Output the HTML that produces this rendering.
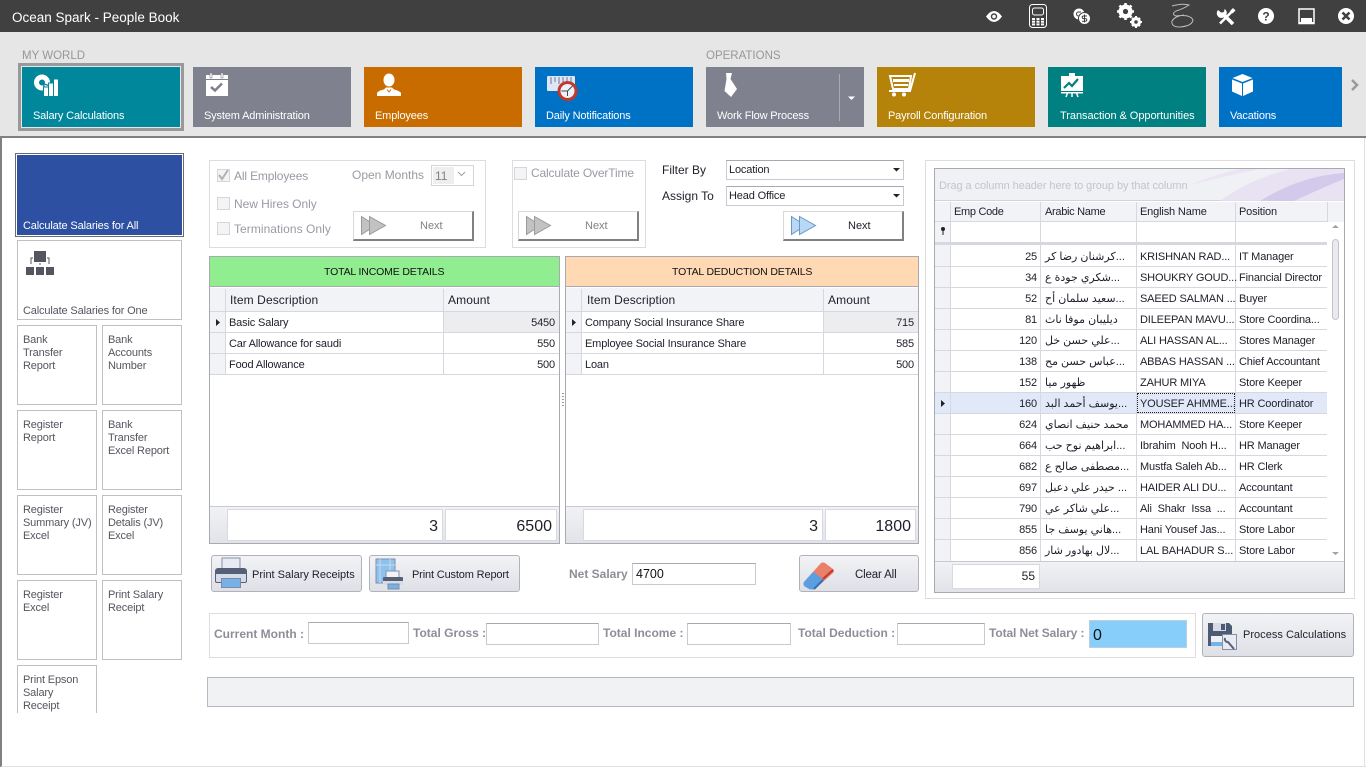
<!DOCTYPE html>
<html><head><meta charset="utf-8"><title>Ocean Spark - People Book</title>
<style>
html,body{margin:0;padding:0;width:1366px;height:768px;overflow:hidden;background:#fff}
body{position:relative;font-family:"Liberation Sans","DejaVu Sans",sans-serif;font-size:11px;letter-spacing:-.15px;color:#1e1e2a}
.b{position:absolute;box-sizing:border-box}
.t{position:absolute;white-space:pre;line-height:18px}
.w{color:#fff}
.g{color:#9a9aa4;font-size:12px;letter-spacing:0;line-height:14px}
.lb{color:#8e8e98;font-weight:bold;font-size:12px;letter-spacing:0;line-height:14px}
.n{color:#808088;font-size:11px;letter-spacing:0}
.p{letter-spacing:0}
.h{font-size:12px;letter-spacing:.1px;line-height:14px}
.th{color:#111;font-size:10.5px;letter-spacing:-.15px}
.ar{letter-spacing:0;direction:ltr}
.r{text-align:right}
.tile{position:absolute;top:67px;height:60px}
.side{position:absolute;box-sizing:border-box;border:1px solid #c0c0c0;width:80px;height:80px;padding:8px 0 0 5px;line-height:13px;color:#55555f}
.next{position:absolute;box-sizing:border-box;height:30px;width:121px;background:#fff;border:1px solid #d8d8d8;border-right:2px solid #808080;border-bottom:2px solid #808080}
.cb{position:absolute;box-sizing:border-box;width:13px;height:13px;border:1px solid #d5d5da;background:#f4f4f6}
.inp{position:absolute;box-sizing:border-box;background:#fff;border:1px solid #c9c9d2;border-top-color:#a8a8b4}
.btn{position:absolute;box-sizing:border-box;height:37px;border:1px solid #b2b2bc;border-radius:3px;background:linear-gradient(#f2f3f6,#dfe0e6)}
.hl{position:absolute;background:#d7d8df}
.ft{position:absolute;background:linear-gradient(#f1f2f5,#e2e3e8);box-sizing:border-box}
.fb{position:absolute;box-sizing:border-box;background:#fff;border:1px solid #d9dae0;font-size:16px;letter-spacing:0;text-align:right;padding-right:4px;line-height:33px;color:#1e1e2a}
.s{position:absolute;background:#f2f3f6}
</style></head><body>

<!-- title bar and ribbon -->
<div class="b" style="left:0;top:0;width:1366px;height:32px;background:#404040"></div>
<div class="t w" style="left:12px;top:9px;font-size:13.5px;letter-spacing:0;line-height:17px">Ocean Spark - People Book</div>
<div class="b" style="left:0;top:32px;width:1366px;height:104px;background:#e6e6e6"></div>
<div class="b" style="left:0;top:136px;width:1366px;height:2px;background:#808080"></div>
<div class="b" style="left:0;top:138px;width:2px;height:629px;background:#808080"></div>
<div class="b" style="left:1px;top:766px;width:1365px;height:1px;background:#e0e0e0"></div>
<div class="b" style="left:1364px;top:138px;width:1px;height:629px;background:#e0e0e0"></div>
<div class="t" style="left:22px;top:47px;color:#979797;font-size:11.5px;letter-spacing:0">MY WORLD</div>
<div class="t" style="left:706px;top:47px;color:#979797;font-size:11.5px;letter-spacing:0">OPERATIONS</div>

<div class="b" style="left:18px;top:63px;width:166px;height:68px;border:3px solid #999"></div>
<div class="tile" style="left:22px;width:158px;background:#00879c"></div>
<div class="tile" style="left:193px;width:158px;background:#80818f"></div>
<div class="tile" style="left:364px;width:158px;background:#c96c00"></div>
<div class="tile" style="left:535px;width:158px;background:#0072c6"></div>
<div class="tile" style="left:706px;width:158px;background:#80818f"></div>
<div class="tile" style="left:877px;width:158px;background:#b5830a"></div>
<div class="tile" style="left:1048px;width:158px;background:#008080"></div>
<div class="tile" style="left:1219px;width:123px;background:#0072c6"></div>
<div class="b" style="left:839px;top:74px;width:1px;height:47px;background:#a9aab4"></div>
<div class="t w" style="left:33px;top:107px">Salary Calculations</div>
<div class="t w" style="left:204px;top:107px">System Administration</div>
<div class="t w" style="left:375px;top:107px">Employees</div>
<div class="t w" style="left:546px;top:107px">Daily Notifications</div>
<div class="t w" style="left:717px;top:107px">Work Flow Process</div>
<div class="t w" style="left:888px;top:107px">Payroll Configuration</div>
<div class="t w" style="left:1060px;top:107px;letter-spacing:-.05px">Transaction &amp; Opportunities</div>
<div class="t w" style="left:1230px;top:107px">Vacations</div>

<!-- left tiles -->
<div class="b" style="left:15px;top:153px;width:169px;height:84px;border:1px solid #6a6a72"></div>
<div class="b" style="left:17px;top:155px;width:165px;height:80px;background:#2d50a3"></div>
<div class="t w" style="left:23px;top:217px">Calculate Salaries for All</div>
<div class="b" style="left:17px;top:240px;width:165px;height:80px;border:1px solid #c0c0c0"></div>
<div class="t" style="left:23px;top:302px;color:#55555f">Calculate Salaries for One</div>
<div class="side" style="left:17px;top:325px">Bank<br>Transfer<br>Report</div>
<div class="side" style="left:102px;top:325px">Bank<br>Accounts<br>Number</div>
<div class="side" style="left:17px;top:410px">Register<br>Report</div>
<div class="side" style="left:102px;top:410px">Bank<br>Transfer<br>Excel Report</div>
<div class="side" style="left:17px;top:495px">Register<br>Summary (JV)<br>Excel</div>
<div class="side" style="left:102px;top:495px">Register<br>Detalis (JV)<br>Excel</div>
<div class="side" style="left:17px;top:580px">Register<br>Excel</div>
<div class="side" style="left:102px;top:580px">Print Salary<br>Receipt</div>
<div class="side" style="left:17px;top:665px;height:48px;border-bottom:0;overflow:hidden">Print Epson<br>Salary<br>Receipt</div>

<!-- option groups -->
<div class="b" style="left:209px;top:160px;width:277px;height:88px;border:1px solid #dddddf"></div>
<div class="cb" style="left:217px;top:169px"></div>
<div class="t g" style="left:234px;top:169px;letter-spacing:-.15px">All Employees</div>
<div class="cb" style="left:217px;top:197px"></div>
<div class="t g" style="left:234px;top:197px;letter-spacing:-.05px">New Hires Only</div>
<div class="cb" style="left:217px;top:222px"></div>
<div class="t g" style="left:234px;top:222px;letter-spacing:.05px">Terminations Only</div>
<div class="t g" style="left:352px;top:168px">Open Months</div>
<div class="b" style="left:431px;top:165px;width:43px;height:21px;border:1px solid #d5d5da"></div>
<div class="b" style="left:433px;top:167px;width:21px;height:17px;background:#eeeeef"></div>
<div class="t n" style="left:435px;top:169px;font-size:12px;line-height:14px">11</div>
<div class="next" style="left:353px;top:211px"></div>
<div class="t n" style="left:420px;top:217px">Next</div>

<div class="b" style="left:512px;top:160px;width:134px;height:88px;border:1px solid #dddddf"></div>
<div class="cb" style="left:514px;top:167px"></div>
<div class="t g" style="left:531px;top:166px;letter-spacing:-.15px">Calculate OverTime</div>
<div class="next" style="left:518px;top:211px"></div>
<div class="t n" style="left:585px;top:217px">Next</div>

<div class="t" style="left:662px;top:163px;font-size:12px;letter-spacing:0;line-height:14px">Filter By</div>
<div class="t" style="left:662px;top:189px;font-size:12px;letter-spacing:0;line-height:14px">Assign To</div>
<div class="inp" style="left:726px;top:160px;width:178px;height:20px"></div>
<div class="inp" style="left:726px;top:186px;width:178px;height:20px"></div>
<div class="t" style="left:729px;top:161px">Location</div>
<div class="t" style="left:729px;top:187px">Head Office</div>
<div class="next" style="left:783px;top:211px"></div>
<div class="t p" style="left:848px;top:217px">Next</div>

<!-- income grid -->
<div class="b" style="left:209px;top:256px;width:351px;height:288px;border:1px solid #a9a9b2;background:#fff"></div>
<div class="b" style="left:210px;top:257px;width:349px;height:30px;background:#90ee90;border-bottom:1px solid #a9a9b2"></div>
<div class="t th" style="left:324px;top:263px">TOTAL INCOME DETAILS</div>
<div class="s" style="left:210px;top:288px;width:349px;height:24px"></div>
<div class="s" style="left:210px;top:312px;width:15px;height:63px"></div>
<div class="b" style="left:444px;top:312px;width:115px;height:20px;background:#ededef"></div>
<div class="hl" style="left:210px;top:311px;width:349px;height:1px"></div>
<div class="hl" style="left:210px;top:332px;width:349px;height:1px"></div>
<div class="hl" style="left:210px;top:353px;width:349px;height:1px"></div>
<div class="hl" style="left:210px;top:374px;width:349px;height:1px"></div>
<div class="hl" style="left:225px;top:289px;width:1px;height:86px"></div>
<div class="hl" style="left:443px;top:289px;width:1px;height:86px"></div>
<div class="t h" style="left:230px;top:293px">Item Description</div>
<div class="t h" style="left:448px;top:293px">Amount</div>
<div class="t" style="left:229px;top:314px">Basic Salary</div>
<div class="t" style="left:229px;top:335px">Car Allowance for saudi</div>
<div class="t" style="left:229px;top:356px">Food Allowance</div>
<div class="t r" style="left:456px;width:99px;top:314px">5450</div>
<div class="t r" style="left:456px;width:99px;top:335px">550</div>
<div class="t r" style="left:456px;width:99px;top:356px">500</div>
<div class="ft" style="left:210px;top:506px;width:349px;height:37px;border-top:1px solid #c9c9d2"></div>
<div class="fb" style="left:227px;top:509px;width:216px;height:32px">3</div>
<div class="fb" style="left:445px;top:509px;width:112px;height:32px">6500</div>

<!-- deduction grid -->
<div class="b" style="left:565px;top:256px;width:354px;height:288px;border:1px solid #a9a9b2;background:#fff"></div>
<div class="b" style="left:566px;top:257px;width:352px;height:30px;background:#ffd8b4;border-bottom:1px solid #a9a9b2"></div>
<div class="t th" style="left:672px;top:263px">TOTAL DEDUCTION DETAILS</div>
<div class="s" style="left:566px;top:288px;width:352px;height:24px"></div>
<div class="s" style="left:566px;top:312px;width:15px;height:63px"></div>
<div class="b" style="left:824px;top:312px;width:94px;height:20px;background:#ededef"></div>
<div class="hl" style="left:566px;top:311px;width:352px;height:1px"></div>
<div class="hl" style="left:566px;top:332px;width:352px;height:1px"></div>
<div class="hl" style="left:566px;top:353px;width:352px;height:1px"></div>
<div class="hl" style="left:566px;top:374px;width:352px;height:1px"></div>
<div class="hl" style="left:581px;top:289px;width:1px;height:86px"></div>
<div class="hl" style="left:823px;top:289px;width:1px;height:86px"></div>
<div class="t h" style="left:587px;top:293px">Item Description</div>
<div class="t h" style="left:828px;top:293px">Amount</div>
<div class="t" style="left:585px;top:314px">Company Social Insurance Share</div>
<div class="t" style="left:585px;top:335px">Employee Social Insurance Share</div>
<div class="t" style="left:585px;top:356px">Loan</div>
<div class="t r" style="left:815px;width:99px;top:314px">715</div>
<div class="t r" style="left:815px;width:99px;top:335px">585</div>
<div class="t r" style="left:815px;width:99px;top:356px">500</div>
<div class="ft" style="left:566px;top:506px;width:352px;height:37px;border-top:1px solid #c9c9d2"></div>
<div class="fb" style="left:583px;top:509px;width:240px;height:32px">3</div>
<div class="fb" style="left:825px;top:509px;width:91px;height:32px">1800</div>
<div class="b" style="left:562px;top:393px;width:2px;height:13px;background:repeating-linear-gradient(#999 0 1px,transparent 1px 3px)"></div>

<!-- employee grid -->
<div class="b" style="left:925px;top:160px;width:430px;height:439px;border:1px solid #dddddf"></div>
<div class="b" style="left:934px;top:168px;width:411px;height:425px;border:1px solid #a9a9b2;background:#fff"></div>
<div class="b" style="left:935px;top:169px;width:409px;height:32px;background:#f0f1f5;border-bottom:1px solid #d3d4db"></div>
<div class="t" style="left:939px;top:177px;color:#c3c4cc;letter-spacing:-.07px">Drag a column header here to group by that column</div>
<div class="s" style="left:935px;top:202px;width:409px;height:20px"></div>
<div class="s" style="left:935px;top:222px;width:15px;height:339px"></div>
<div class="b" style="left:935px;top:392px;width:392px;height:21px;background:#e1e9f9"></div>
<div class="hl" style="left:935px;top:221px;width:392px;height:1px"></div>
<div class="hl" style="left:935px;top:242px;width:392px;height:3px"></div>
<div class="hl" style="left:935px;top:266px;width:392px;height:1px"></div>
<div class="hl" style="left:935px;top:287px;width:392px;height:1px"></div>
<div class="hl" style="left:935px;top:308px;width:392px;height:1px"></div>
<div class="hl" style="left:935px;top:329px;width:392px;height:1px"></div>
<div class="hl" style="left:935px;top:350px;width:392px;height:1px"></div>
<div class="hl" style="left:935px;top:371px;width:392px;height:1px"></div>
<div class="hl" style="left:935px;top:392px;width:392px;height:1px"></div>
<div class="hl" style="left:935px;top:413px;width:392px;height:1px"></div>
<div class="hl" style="left:935px;top:434px;width:392px;height:1px"></div>
<div class="hl" style="left:935px;top:455px;width:392px;height:1px"></div>
<div class="hl" style="left:935px;top:476px;width:392px;height:1px"></div>
<div class="hl" style="left:935px;top:497px;width:392px;height:1px"></div>
<div class="hl" style="left:935px;top:518px;width:392px;height:1px"></div>
<div class="hl" style="left:935px;top:539px;width:392px;height:1px"></div>
<div class="hl" style="left:950px;top:202px;width:1px;height:359px"></div>
<div class="hl" style="left:1040px;top:202px;width:1px;height:359px"></div>
<div class="hl" style="left:1136px;top:202px;width:1px;height:359px"></div>
<div class="hl" style="left:1235px;top:202px;width:1px;height:359px"></div>
<div class="hl" style="left:1327px;top:202px;width:1px;height:20px"></div>
<div class="b" style="left:1137px;top:393px;width:98px;height:20px;border:1px dotted #222"></div>
<div class="b" style="left:1332px;top:239px;width:7px;height:81px;border:1px solid #c3c4cc;border-radius:4px;background:#e9eaee"></div>
<div class="ft" style="left:935px;top:561px;width:409px;height:31px;border-top:1px solid #c9c9d2"></div>
<div class="fb" style="left:952px;top:564px;width:88px;height:25px;font-size:12px;line-height:23px">55</div>
<div class="t" style="left:954px;top:203px;letter-spacing:-.3px">Emp Code</div>
<div class="t" style="left:1045px;top:203px;letter-spacing:-.3px">Arabic Name</div>
<div class="t" style="left:1140px;top:203px">English Name</div>
<div class="t" style="left:1239px;top:203px">Position</div>

<div class="t r" style="left:990px;width:47px;top:248px">25</div><div class="t ar" style="left:1045px;top:248px">كرشنان رضا كر...</div><div class="t" style="left:1140px;top:248px">KRISHNAN RAD...</div><div class="t" style="left:1239px;top:248px">IT Manager</div>
<div class="t r" style="left:990px;width:47px;top:269px">34</div><div class="t ar" style="left:1045px;top:269px">شكري جودة ع...</div><div class="t" style="left:1140px;top:269px">SHOUKRY GOUD...</div><div class="t" style="left:1239px;top:269px">Financial Director</div>
<div class="t r" style="left:990px;width:47px;top:290px">52</div><div class="t ar" style="left:1045px;top:290px">سعيد سلمان أح...</div><div class="t" style="left:1140px;top:290px">SAEED SALMAN ...</div><div class="t" style="left:1239px;top:290px">Buyer</div>
<div class="t r" style="left:990px;width:47px;top:311px">81</div><div class="t ar" style="left:1045px;top:311px">ديليبان موفا ناث</div><div class="t" style="left:1140px;top:311px">DILEEPAN MAVU...</div><div class="t" style="left:1239px;top:311px">Store Coordina...</div>
<div class="t r" style="left:990px;width:47px;top:332px">120</div><div class="t ar" style="left:1045px;top:332px">علي حسن خل...</div><div class="t" style="left:1140px;top:332px">ALI HASSAN AL...</div><div class="t" style="left:1239px;top:332px">Stores Manager</div>
<div class="t r" style="left:990px;width:47px;top:353px">138</div><div class="t ar" style="left:1045px;top:353px">عباس حسن مح...</div><div class="t" style="left:1140px;top:353px">ABBAS HASSAN ...</div><div class="t" style="left:1239px;top:353px">Chief Accountant</div>
<div class="t r" style="left:990px;width:47px;top:374px">152</div><div class="t ar" style="left:1045px;top:374px">ظهور ميا</div><div class="t" style="left:1140px;top:374px">ZAHUR MIYA</div><div class="t" style="left:1239px;top:374px">Store Keeper</div>
<div class="t r" style="left:990px;width:47px;top:395px">160</div><div class="t ar" style="left:1045px;top:395px">يوسف أحمد البد...</div><div class="t" style="left:1140px;top:395px">YOUSEF AHMME...</div><div class="t" style="left:1239px;top:395px">HR Coordinator</div>
<div class="t r" style="left:990px;width:47px;top:416px">624</div><div class="t ar" style="left:1045px;top:416px">محمد حنيف انصاي</div><div class="t" style="left:1140px;top:416px">MOHAMMED HA...</div><div class="t" style="left:1239px;top:416px">Store Keeper</div>
<div class="t r" style="left:990px;width:47px;top:437px">664</div><div class="t ar" style="left:1045px;top:437px">ابراهيم نوح حب...</div><div class="t" style="left:1140px;top:437px">Ibrahim  Nooh H...</div><div class="t" style="left:1239px;top:437px">HR Manager</div>
<div class="t r" style="left:990px;width:47px;top:458px">682</div><div class="t ar" style="left:1045px;top:458px">مصطفى صالح ع...</div><div class="t" style="left:1140px;top:458px">Mustfa Saleh Ab...</div><div class="t" style="left:1239px;top:458px">HR Clerk</div>
<div class="t r" style="left:990px;width:47px;top:479px">697</div><div class="t ar" style="left:1045px;top:479px">حيدر علي دعبل ...</div><div class="t" style="left:1140px;top:479px">HAIDER ALI DU...</div><div class="t" style="left:1239px;top:479px">Accountant</div>
<div class="t r" style="left:990px;width:47px;top:500px">790</div><div class="t ar" style="left:1045px;top:500px">علي شاكر عي...</div><div class="t" style="left:1140px;top:500px">Ali  Shakr  Issa  ...</div><div class="t" style="left:1239px;top:500px">Accountant</div>
<div class="t r" style="left:990px;width:47px;top:521px">855</div><div class="t ar" style="left:1045px;top:521px">هاني يوسف جا...</div><div class="t" style="left:1140px;top:521px">Hani Yousef Jas...</div><div class="t" style="left:1239px;top:521px">Store Labor</div>
<div class="t r" style="left:990px;width:47px;top:542px">856</div><div class="t ar" style="left:1045px;top:542px">لال بهادور شار...</div><div class="t" style="left:1140px;top:542px">LAL BAHADUR S...</div><div class="t" style="left:1239px;top:542px">Store Labor</div>

<!-- buttons row -->
<div class="btn" style="left:211px;top:555px;width:151px"></div>
<div class="t p" style="left:252px;top:566px">Print Salary Receipts</div>
<div class="btn" style="left:369px;top:555px;width:151px"></div>
<div class="t" style="left:412px;top:566px">Print Custom Report</div>
<div class="t lb" style="left:569px;top:567px">Net Salary</div>
<div class="inp" style="left:632px;top:563px;width:124px;height:22px"></div>
<div class="t" style="left:636px;top:565px;font-size:12.5px;letter-spacing:0;color:#111">4700</div>
<div class="btn" style="left:799px;top:555px;width:120px"></div>
<div class="t" style="left:855px;top:566px;font-size:11.5px">Clear All</div>

<!-- summary -->
<div class="b" style="left:209px;top:613px;width:987px;height:45px;border:1px solid #dddddf"></div>
<div class="t lb" style="left:214px;top:627px">Current Month :</div>
<div class="inp" style="left:308px;top:622px;width:101px;height:22px"></div>
<div class="t lb" style="left:413px;top:626px">Total Gross :</div>
<div class="inp" style="left:486px;top:623px;width:113px;height:22px"></div>
<div class="t lb" style="left:603px;top:626px">Total Income :</div>
<div class="inp" style="left:687px;top:623px;width:104px;height:22px"></div>
<div class="t lb" style="left:798px;top:626px">Total Deduction :</div>
<div class="inp" style="left:897px;top:623px;width:88px;height:22px"></div>
<div class="t lb" style="left:989px;top:626px;letter-spacing:-.1px">Total Net Salary :</div>
<div class="b" style="left:1089px;top:620px;width:98px;height:28px;background:#87cefa;border:1px solid #b9cfe0"></div>
<div class="t" style="left:1093px;top:627px;font-size:16px;letter-spacing:0;line-height:16px;color:#111;margin-top:1px">0</div>
<div class="btn" style="left:1202px;top:613px;width:152px;height:44px"></div>
<div class="t p" style="left:1243px;top:626px;letter-spacing:.02px">Process Calculations</div>
<div class="b" style="left:207px;top:677px;width:1147px;height:30px;background:#f1f2f4;border:1px solid #b8b8c2"></div>

<!-- icons -->
<svg style="position:absolute;left:0;top:0" width="1366" height="768" viewBox="0 0 1366 768">
<!-- titlebar -->
<path d="M986 16.500q8-11 16 0q-8 11-16 0z" fill="#fff"/><circle cx="994" cy="16.500" r="3.200" fill="#404040"/><circle cx="994" cy="16.500" r="1.800" fill="#fff"/>
<rect x="1029.500" y="4.500" width="17" height="23" rx="3" fill="none" stroke="#fff"/><rect x="1032.500" y="8" width="11" height="7" rx="2" fill="none" stroke="#fff"/>
<g fill="#fff"><rect x="1032" y="18" width="3" height="2"/><rect x="1036.500" y="18" width="3" height="2"/><rect x="1041" y="18" width="3" height="2"/><rect x="1032" y="20.700" width="3" height="2"/><rect x="1036.500" y="20.700" width="3" height="2"/><rect x="1041" y="20.700" width="3" height="2"/><rect x="1032" y="23.400" width="3" height="2"/><rect x="1036.500" y="23.400" width="3" height="2"/><rect x="1041" y="23.400" width="3" height="2"/></g>
<circle cx="1079" cy="14" r="5.500" fill="#fff"/><circle cx="1084.500" cy="18.500" r="6" fill="#fff" stroke="#404040"/><path d="M1087 16h-3.500a1.300 1.300 0 0 0 0 2.600h2a1.300 1.300 0 0 1 0 2.600H1082M1084.500 14.500v8" stroke="#404040" fill="none"/><path d="M1081 12h-2.500a2 2 0 0 0 0 4" stroke="#404040" fill="none"/>
<g fill="none" stroke="#fff"><circle cx="1125.500" cy="11.500" r="5" stroke-width="4"/><path d="M1125.500 3v17M1117 11.500h17M1119.500 5.500l12 12M1131.500 5.500l-12 12" stroke-width="2.600"/><circle cx="1136" cy="22" r="3.500" stroke-width="3"/><path d="M1136 16v12M1130 22h12M1132 18l8 8M1140 18l-8 8" stroke-width="2"/></g>
<circle cx="1125.500" cy="11.500" r="2.600" fill="#404040"/><circle cx="1136" cy="22" r="1.800" fill="#404040"/>
<path d="M1172 6Q1182 3 1189 5Q1183 9 1176 11Q1171 14 1176 16Q1190 14 1193 20Q1192 26 1180 27Q1171 27 1172 21Q1175 16 1184 15" fill="none" stroke="#bdbdbd" stroke-width="1"/>
<path d="M1222 13l11 11" stroke="#fff" stroke-width="3.500" fill="none"/><path d="M1218 10a4.500 4.500 0 0 0 7 6.500a4.500 4.500 0 0 0-.5-7.500l-.5 3.500h-3z" fill="#fff"/><path d="M1234 9.500l-14 14" stroke="#fff" stroke-width="2.500" fill="none"/><path d="M1230 11l3-3 2.500 2.500-3 3z" fill="#fff"/>
<circle cx="1266" cy="16" r="8" fill="#fff"/><text x="1266" y="20.500" font-size="12" font-weight="bold" text-anchor="middle" fill="#404040" font-family="Liberation Sans">?</text>
<rect x="1299" y="9" width="15" height="14.500" fill="none" stroke="#fff" stroke-width="1.500"/><rect x="1301" y="18" width="11" height="4" fill="#fff"/><rect x="1299" y="22" width="15" height="2" fill="#fff"/>
<circle cx="1346" cy="16" r="8" fill="#fff"/><path d="M1342.500 12.500l7 7M1349.500 12.500l-7 7" stroke="#404040" stroke-width="2.600"/>
<!-- ribbon icons -->
<circle cx="42" cy="82.500" r="5.500" fill="none" stroke="#fff" stroke-width="5"/><path d="M44 84l6 2M43 84l3 6" stroke="#00879c" stroke-width="1.200"/>
<g fill="#fff" stroke="#00879c" stroke-width="1"><rect x="43.500" y="87" width="5" height="9.500"/><rect x="48.500" y="83" width="5" height="13.500"/><rect x="53.500" y="79" width="5" height="17.500"/></g>
<path d="M206 75h22v21h-22z" fill="#fff"/><rect x="210" y="73" width="2" height="5" fill="#fff" stroke="#80818f" stroke-width=".6"/><rect x="221" y="73" width="2" height="5" fill="#fff" stroke="#80818f" stroke-width=".6"/><rect x="206" y="79" width="22" height="1" fill="#80818f"/><path d="M211 87l4 3.500 7-7" fill="none" stroke="#80818f" stroke-width="2.500"/>
<ellipse cx="389" cy="80" rx="5.500" ry="6.500" fill="#fff"/><path d="M377 96v-3q1-2 7-3.500l2-2h6l2 2q6 1.500 7 3.500v3z" fill="#fff"/><path d="M387 89.500l2 2.500 2-2.500" stroke="#c96c00" fill="none"/>
<rect x="547" y="76" width="28" height="15" rx="1" fill="#dfe6f7"/><path d="M551 77v7M555 77v5M559 77v7M563 77v5M567 77v7M571 77v5" stroke="#6d7a92"/>
<circle cx="567.500" cy="91" r="10" fill="#c0392b"/><circle cx="567.500" cy="91" r="7" fill="#eef1f6"/><path d="M567.500 91l5-5M567.500 91h-6M567.500 91v5" stroke="#40485a" fill="none"/>
<path d="M726 73h6l-1.500 6 6.500 10-6 8-6.500-6 2-12z" fill="#fff"/>
<path d="M890 76h21l-2 13h-16z" fill="none" stroke="#fff" stroke-width="2"/><path d="M893 79h16v3h-16zM894 84h14v2h-14z" fill="#fff"/><path d="M889 91h21l5-18" stroke="#fff" stroke-width="2" fill="none"/><circle cx="894" cy="94.500" r="2" fill="#fff"/><circle cx="904" cy="94.500" r="2" fill="#fff"/>
<rect x="1061" y="76" width="22" height="15" fill="#fff"/><rect x="1069" y="73" width="6" height="3" fill="#fff"/><rect x="1061" y="92" width="22" height="1.500" fill="#fff"/><path d="M1064 88l5-5 3 3 6-7" fill="none" stroke="#008080" stroke-width="2.200"/><path d="M1066 97l1.500-4M1078 97l-1.500-4M1072 97v-4" stroke="#fff" stroke-width="1.500"/>
<path d="M1242.500 74l10 4-10 4-10-4z" fill="#fff"/><path d="M1232 79.500l10 4v12.500l-10-4.500z" fill="#fff"/><path d="M1253 79.500l-10 4v12.500l10-4.500z" fill="#fff"/>
<path d="M848 96.500h7l-3.500 3.500z" fill="#fff"/>
<path d="M1352 80l5 5-5 5" fill="none" stroke="#9a9a9a" stroke-width="2.500"/>
<!-- left tile icon -->
<g fill="#55555f"><rect x="26" y="267" width="8" height="8"/><rect x="36" y="267" width="8" height="8"/><rect x="46" y="267" width="8" height="8"/><rect x="34" y="251" width="12" height="11"/><path d="M33 258h-2v6M47 258h2v6" fill="none" stroke="#55555f"/><rect x="39.500" y="263" width="1" height="2"/></g>
<!-- checks & next arrows -->
<path d="M219 175l3 4 6-9" fill="none" stroke="#b0b0b6" stroke-width="2"/>
<path d="M458 172l3.500 3.500 3.500-3.500" fill="none" stroke="#a0a0a6"/>
<g fill="#c2c2c2" stroke="#9b9b9b"><path d="M361.500 216.500l14 9-14 9z"/><path d="M369.500 216.500l16 9-16 9z"/><path d="M526.500 216.500l14 9-14 9z"/><path d="M534.500 216.500l16 9-16 9z"/></g>
<g fill="#b9d8f5" stroke="#6b96c4"><path d="M791.500 216.500l14 9-14 9z"/><path d="M799.500 216.500l16 9-16 9z"/></g>
<path d="M893 168h7l-3.500 3.500zM893 194h7l-3.500 3.500z" fill="#222"/>
<!-- grid indicators -->
<path d="M216 319v7l4-3.500zM572 319v7l4-3.500zM941 400v7l4-3.500z" fill="#222"/>
<circle cx="943" cy="229" r="2" fill="#222"/><path d="M943 230v5" stroke="#222"/>
<path d="M1332 228h7l-3.500-3zM1332 552h7l-3.500 3z" fill="#a0a0a8"/>
<!-- group panel swoosh -->
<path d="M1220 201q30-22 70-32h54v32z" fill="#e6dff1" opacity=".8"/><path d="M1260 201q40-25 84-28v6q-20 8-50 22z" fill="#cbbfe8" opacity=".7"/><path d="M1190 185q30-12 50-16h20q-30 6-70 16z" fill="#ece4f3"/>
<!-- button icons -->
<rect x="222" y="558" width="18" height="12" fill="#e8ebf4" stroke="#8590a6"/><path d="M218 568h26a3 3 0 0 1 3 3v10a2 2 0 0 1-2 2h-28a2 2 0 0 1-2-2v-10a3 3 0 0 1 3-3z" fill="#556078"/><path d="M216 574h30v7a1 1 0 0 1-1 1h-28a1 1 0 0 1-1-1z" fill="#d5dbe8"/><rect x="221.500" y="578.500" width="19" height="9" fill="#76b2e6" stroke="#7e8aa3"/>
<rect x="376" y="559" width="19" height="24" fill="#8cc2ee" stroke="#7e8fae"/><path d="M380 559v24M390 559v24M376 565h19" stroke="#d0d8e8"/><rect x="386" y="571" width="13" height="8" fill="#f0f2f8" stroke="#8590a6"/><path d="M384 577h18a1 1 0 0 1 1 1v7h-20v-7a1 1 0 0 1 1-1z" fill="#556078"/><path d="M383 581h20v4h-20z" fill="#d5dbe8"/><rect x="388" y="584" width="11" height="5" fill="#76b2e6" stroke="#7e8aa3"/>
<path d="M804 582l17-19q2-1 4 0l8 6q2 2 0 4l-17 15q-2 2-5 1l-6-3q-2-2-1-4z" fill="#e8806a"/><path d="M804 582l9-10 10 7-9 10q-2 1-5 0l-5-3q-1-2 0-4z" fill="#5a9fe0"/><path d="M823 579l10-9" stroke="#c0392b" stroke-width="2"/><path d="M814 589l9-9" stroke="#3a6fae" stroke-width="2"/>
<path d="M1208 623h21l3 3v20h-24z" fill="#4d5a74"/><rect x="1213" y="623" width="13" height="8" fill="#d7dbe6"/><rect x="1221" y="624" width="4" height="6" fill="#4d5a74"/><rect x="1211" y="636" width="18" height="10" fill="#eef0f5"/><rect x="1211" y="642" width="18" height="4" fill="#76b2e6"/>
<rect x="1222.500" y="634.500" width="14" height="15" fill="#e8ebf3" stroke="#8590a6"/><path d="M1225 638a3 3 0 0 0 3 4l6 7" fill="none" stroke="#556078" stroke-width="2"/>
</svg>
</body></html>
